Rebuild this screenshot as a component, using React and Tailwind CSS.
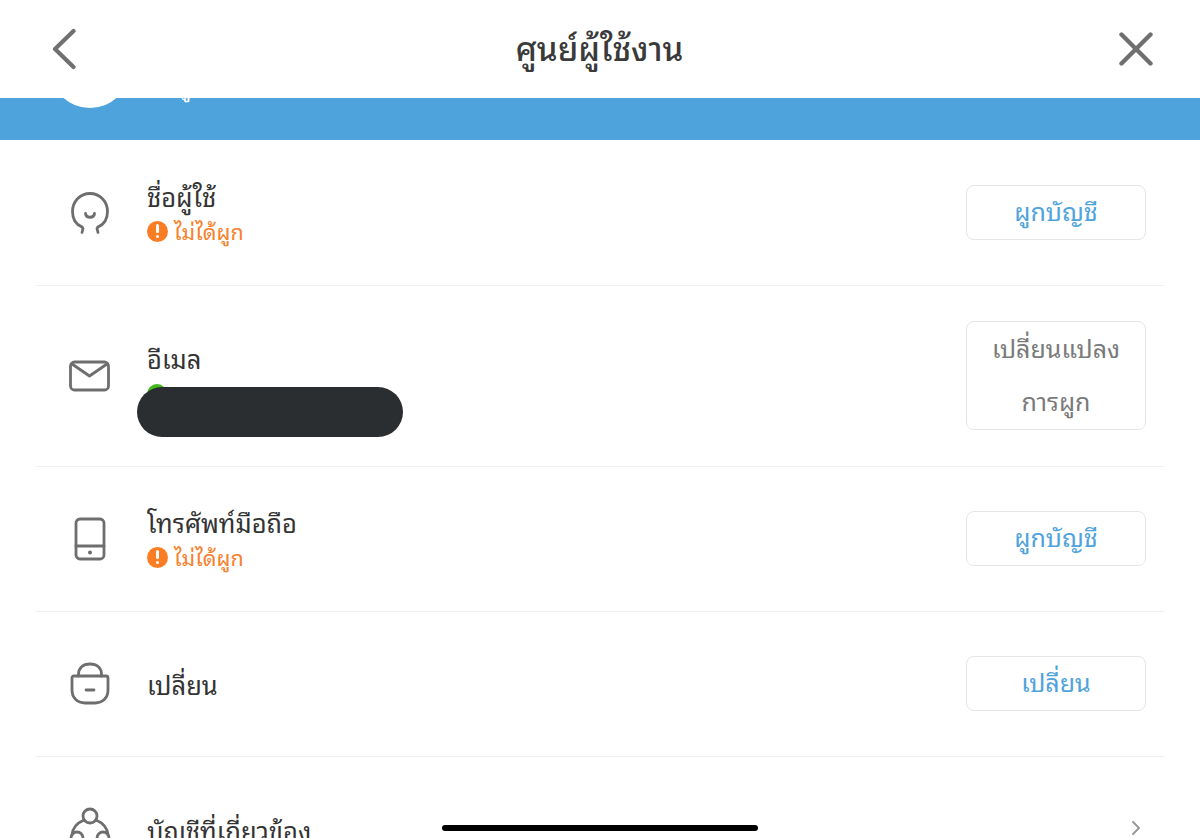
import { ChevronRight } from "lucide-react";

const FONT = "font-['Noto_Sans_Thai_Looped','Noto_Sans','Noto_Sans_Thai','Liberation_Sans','DejaVu_Sans',sans-serif]";

/* ICONS */

function BackIcon() {
  return (
    <svg width="24" height="42" viewBox="0 0 24 42" fill="none" stroke="#707070" strokeWidth="4.200" strokeLinecap="round" strokeLinejoin="round">
      <path d="M21.500 3L3 21L21.500 39" />
    </svg>
  );
}

function CloseIcon() {
  return (
    <svg width="34" height="34" viewBox="0 0 34 34" fill="none" stroke="#707070" strokeWidth="4.400" strokeLinecap="round">
      <path d="M2.500 2.500L31.500 31.500M31.500 2.500L2.500 31.500" />
    </svg>
  );
}

function UserIcon() {
  return (
    <svg width="44" height="46" viewBox="0 0 44 46" fill="none" stroke="#6e6e6e" strokeWidth="2.800" strokeLinecap="round" strokeLinejoin="round">
      <path d="M14 37C8 34.500 4.500 28.500 4.500 21.500C4.500 11.500 12 3.500 22 3.500C32 3.500 39.500 11.500 39.500 21.500C39.500 28.500 36 34.500 30 37" />
      <path d="M14 37L15 38.500L14 42.500" />
      <path d="M30 37L29 38.500L30 42.500" />
      <path d="M17.500 23.500C18 28.500 26 28.500 26.500 23.500" />
    </svg>
  );
}

function MailIcon() {
  return (
    <svg width="42" height="32" viewBox="0 0 42 32" fill="none" stroke="#6e6e6e" strokeWidth="2.800" strokeLinecap="round" strokeLinejoin="round">
      <rect x="1.500" y="2" width="38" height="28" rx="4" />
      <path d="M3 4L20.500 16L38 4" />
    </svg>
  );
}

function PhoneIcon() {
  return (
    <svg width="32" height="44" viewBox="0 0 32 44" fill="none" stroke="#6e6e6e" strokeWidth="2.800" strokeLinecap="round" strokeLinejoin="round">
      <rect x="2" y="2" width="28" height="40" rx="4" />
      <path d="M2 29H30" />
      <circle cx="16" cy="35.500" r="2" fill="#6e6e6e" stroke="none" />
    </svg>
  );
}

function LockIcon() {
  return (
    <svg width="40" height="44" viewBox="0 0 40 44" fill="none" stroke="#6e6e6e" strokeWidth="2.800" strokeLinecap="round" strokeLinejoin="round">
      <path d="M8.500 14V12.500C8.500 6 13 2 20 2C27 2 31.500 6 31.500 12.500V14" />
      <path d="M4 14H36C37.200 14 38 14.800 38 16V28C38 35.500 33 41 25 41H15C7 41 2 35.500 2 28V16C2 14.800 2.800 14 4 14Z" />
      <path d="M16 28H24" />
    </svg>
  );
}

function LinkedIcon() {
  return (
    <svg width="44" height="46" viewBox="0 0 44 46" fill="none" stroke="#6e6e6e" strokeWidth="2.800" strokeLinecap="round" strokeLinejoin="round">
      <circle cx="22" cy="9" r="7" />
      <path d="M16 13C9 16 4.500 21.500 4 28" />
      <path d="M28 13C35 16 39.500 21.500 40 28" />
      <circle cx="9" cy="31" r="6" />
      <circle cx="35" cy="31" r="6" />
    </svg>
  );
}

function Warning() {
  return (
    <span className="flex h-[21px] w-[21px] shrink-0 items-center justify-center rounded-full bg-[#fb7d23]">
      <span className="flex flex-col items-center gap-[2px]">
        <span className="h-[9px] w-[3px] rounded-full bg-white" />
        <span className="h-[3px] w-[3px] rounded-full bg-white" />
      </span>
    </span>
  );
}

/* ROWS */

function Status() {
  return (
    <div className="mt-[4px] flex h-[28px] items-center gap-[6px]">
      <Warning />
      <span className="text-[21.500px] leading-[28px] text-[#f9802a]">ไม่ได้ผูก</span>
    </div>
  );
}

function ActionButton({ children, tone = "text-[#4fa3dc]", tall }) {
  return (
    <button className={`w-[180px] rounded-[8px] border border-[#e6e6e6] bg-white text-center text-[25px] ${tone} ${tall ? "h-[109px] px-3 leading-[53px]" : "h-[55px] pb-[4px] leading-[47px]"}`}>
      <span className={tall ? "-mt-[4px] block" : "block"}>{children}</span>
    </button>
  );
}

function Row({ icon, height, children, action }) {
  return (
    <div className={`mx-[36px] flex items-center border-b border-[#efefef] pr-[18px] ${height}`}>
      <div className="flex w-[111px] shrink-0 justify-center pr-[3px]">{icon}</div>
      <div className="min-w-0 flex-1">{children}</div>
      {action}
    </div>
  );
}

function Label({ children }) {
  return <div className="text-[25.500px] leading-[34px] text-[#333333]">{children}</div>;
}

export default function App() {
  return (
    <div className={`relative h-[838px] w-[1200px] overflow-hidden bg-white ${FONT}`}>
      {/* HEADER */}
      <header className="relative z-10 flex h-[98px] items-center justify-between bg-white pl-[52px] pr-[47px]">
        <BackIcon />
        <h1 className="ml-[4px] pb-[4px] text-[33px] font-medium text-[#3a3a3a]">ศูนย์ผู้ใช้งาน</h1>
        <CloseIcon />
      </header>

      {/* BLUE BAND, the profile block is scrolled up under the header */}
      <div className="relative h-[42px] overflow-hidden bg-[#4fa3dc]">
        <div className="absolute left-[50px] top-[-70px] h-[80px] w-[80px] rounded-full bg-white" />
        <span className="absolute left-[177px] top-[-28px] text-[22px] leading-[30px] text-white">ผู</span>
      </div>

      {/* LIST */}
      <Row
        icon={<UserIcon />}
        height="h-[146px]"
        action={<ActionButton>ผูกบัญชี</ActionButton>}
      >
        <div className="mb-[1px]">
          <Label>ชื่อผู้ใช้</Label>
          <Status />
        </div>
      </Row>

      <Row
        icon={<MailIcon />}
        height="h-[181px] pb-[1px]"
        action={
          <ActionButton tone="text-[#7a7a7a]" tall>
            เปลี่ยนแปลงการผูก
          </ActionButton>
        }
      >
        <div className="relative mt-[6px] h-[76px]">
          <Label>อีเมล</Label>
          <span className="absolute left-0 top-[43px] h-[20px] w-[20px] rounded-full bg-[#44b81e]" />
          {/* redacted email */}
          <div className="absolute left-[-10px] top-[46px] h-[50px] w-[266px] rounded-full bg-[#2b2e31]" />
        </div>
      </Row>

      <Row
        icon={<PhoneIcon />}
        height="h-[145px] pb-[1px]"
        action={<ActionButton>ผูกบัญชี</ActionButton>}
      >
        <div className="mb-[1px]">
          <Label>โทรศัพท์มือถือ</Label>
          <Status />
        </div>
      </Row>

      <Row
        icon={<LockIcon />}
        height="h-[145px] pb-[1px]"
        action={<ActionButton>เปลี่ยน</ActionButton>}
      >
        <Label>เปลี่ยน</Label>
      </Row>

      <div className="mx-[36px] flex items-start pr-[18px] pt-[50px]">
        <div className="flex w-[111px] shrink-0 justify-center pr-[3px]">
          <LinkedIcon />
        </div>
        <div className="flex-1 pt-[6px]">
          <Label>บัญชีที่เกี่ยวข้อง</Label>
        </div>
        <ChevronRight size={24} strokeWidth={2} color="#999999" className="mr-[-2px] mt-[9px]" />
      </div>

      {/* HOME INDICATOR */}
      <div className="absolute bottom-[7px] left-[442px] h-[6px] w-[316px] rounded-full bg-black" />
    </div>
  );
}
